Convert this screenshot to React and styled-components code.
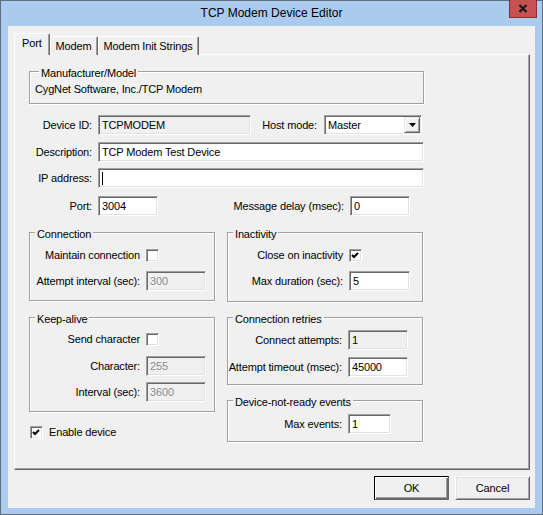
import styled, { createGlobalStyle } from "styled-components";

const GlobalStyle = createGlobalStyle`
  html, body {
    margin: 0;
    padding: 0;
    background: #ffffff;
  }
  body {
    font-family: "Liberation Sans", Arial, sans-serif;
    font-size: 11px;
    letter-spacing: -0.15px;
    color: #000;
  }
`;

const Window = styled.div`
  position: relative;
  width: 543px;
  height: 515px;
  box-sizing: border-box;
  border: 1px solid #5d6f83;
  background: #aacbee;
  display: flex;
  flex-direction: column;
`;

const TitleBar = styled.div`
  height: 25px;
  display: flex;
  align-items: center;
  justify-content: center;
  font-family: "Liberation Sans", Arial, sans-serif;
  font-size: 12px;
  letter-spacing: 0;
  color: #000;
  padding-bottom: 1px;
  box-sizing: border-box;
`;

const CloseButton = styled.div`
  position: absolute;
  top: -1px;
  right: 5px;
  width: 28px;
  height: 18px;
  box-sizing: border-box;
  background: #c75050;
  border: 1px solid #84322f;
  border-top: none;
  display: flex;
  align-items: center;
  justify-content: center;
`;

const Client = styled.div`
  margin: 0 7px;
  height: 482px;
  box-sizing: border-box;
  background: #f0f0f0;
  padding: 8px 5px 0 6px;
  display: flex;
  flex-direction: column;
`;

const TabStrip = styled.div`
  display: flex;
  align-items: flex-end;
  height: 21px;
  position: relative;
  z-index: 1;
  margin-bottom: -1px;
`;

const Tab = styled.div`
  box-sizing: border-box;
  height: ${(p) => (p.$active ? 22 : 19)}px;
  padding: 0 ${(p) => (p.$active ? 7 : 5)}px;
  background: #f0f0f0;
  border-left: 1px solid #fff;
  border-top: 1px solid #fff;
  border-right: 1px solid #696969;
  box-shadow: inset -1px 0 0 #a0a0a0;
  border-radius: 2px 2px 0 0;
  display: flex;
  align-items: center;
  padding-bottom: ${(p) => (p.$active ? 3 : 1)}px;
`;

const Panel = styled.div`
  height: 416px;
  box-sizing: border-box;
  border-top: 1px solid #fff;
  border-left: 1px solid #fff;
  border-right: 1px solid #696969;
  border-bottom: 1px solid #696969;
  box-shadow: inset -1px -1px 0 #a0a0a0;
  padding: 16px 0 0 14px;
`;

const Group = styled.div`
  position: relative;
  box-sizing: border-box;
  width: ${(p) => p.$w}px;
  height: ${(p) => p.$h}px;
  margin-top: ${(p) => p.$mt || 0}px;
  padding-top: ${(p) => p.$pt || 0}px;
  border: 1px solid #a0a0a0;
  box-shadow: inset 1px 1px 0 #fff, 1px 1px 0 #fff;
`;

const Legend = styled.span`
  position: absolute;
  top: -5px;
  left: ${(p) => p.$lx || 5}px;
  padding: 0 2px;
  line-height: 13px;
  background: #f0f0f0;
`;

const Plain = styled.div`
  padding: 11px 0 0 5px;
  line-height: 13px;
`;

const Row = styled.div`
  display: flex;
  align-items: center;
  height: ${(p) => p.$h || 20}px;
  margin-top: ${(p) => p.$mt || 0}px;
`;

const Label = styled.span`
  width: ${(p) => p.$w}px;
  margin-right: ${(p) => (p.$gap === undefined ? 6 : p.$gap)}px;
  text-align: right;
  line-height: 13px;
  white-space: nowrap;
  flex-shrink: 0;
`;

const Field = styled.div`
  width: ${(p) => p.$w}px;
  height: 20px;
  box-sizing: border-box;
  flex-shrink: 0;
  border-top: 1px solid #a0a0a0;
  border-left: 1px solid #a0a0a0;
  border-right: 1px solid #fff;
  border-bottom: 1px solid #fff;
  box-shadow: inset 1px 1px 0 #696969, inset -1px -1px 0 #e3e3e3;
  background: ${(p) => (p.$readOnly || p.$disabled ? "#f0f0f0" : "#fff")};
  color: ${(p) => (p.$disabled ? "#8d8d8d" : "#000")};
  padding-left: 3px;
  display: flex;
  align-items: center;
  white-space: nowrap;
`;

const Caret = styled.span`
  width: 1px;
  height: 13px;
  background: #000;
`;

const DropButton = styled.div`
  margin-left: auto;
  margin-right: 1px;
  width: 16px;
  height: 16px;
  box-sizing: border-box;
  background: #f0f0f0;
  border-top: 1px solid #e3e3e3;
  border-left: 1px solid #e3e3e3;
  border-right: 1px solid #696969;
  border-bottom: 1px solid #696969;
  box-shadow: inset 1px 1px 0 #fff, inset -1px -1px 0 #a0a0a0;
  display: flex;
  align-items: center;
  justify-content: center;
`;

const Check = styled.div`
  width: 13px;
  height: 13px;
  box-sizing: border-box;
  flex-shrink: 0;
  border-top: 1px solid #a0a0a0;
  border-left: 1px solid #a0a0a0;
  border-right: 1px solid #fff;
  border-bottom: 1px solid #fff;
  box-shadow: inset 1px 1px 0 #696969, inset -1px -1px 0 #e3e3e3;
  background: #fff;
  display: flex;
  align-items: center;
  justify-content: center;
`;

const Columns = styled.div`
  display: flex;
  gap: 12px;
  margin-top: 16px;
`;

const Column = styled.div`
  display: flex;
  flex-direction: column;
`;

const EnableRow = styled.div`
  display: flex;
  align-items: center;
  gap: 6px;
  margin: 14px 0 0 1px;
  line-height: 13px;
`;

const Footer = styled.div`
  display: flex;
  justify-content: flex-end;
  gap: 6px;
  margin-top: 6px;
`;

const Button = styled.div`
  width: 75px;
  height: 24px;
  box-sizing: border-box;
  background: #f0f0f0;
  display: flex;
  align-items: center;
  justify-content: center;
  border: 1px solid ${(p) => (p.$default ? "#000" : "#fff")};
  box-shadow: ${(p) =>
    p.$default
      ? "inset 1px 1px 0 #fff, inset -1px -1px 0 #696969, inset -2px -2px 0 #a0a0a0"
      : "inset 1px 1px 0 #e3e3e3, inset -1px -1px 0 #a0a0a0"};
  border-right-color: #696969;
  border-bottom-color: #696969;
`;

const CheckMark = () => (
  <svg width="9" height="9" viewBox="0 0 9 9">
    <polyline points="1,4 3,6 7,2" fill="none" stroke="#000" strokeWidth="2" />
  </svg>
);

const CheckBox = ({ checked }) => <Check>{checked && <CheckMark />}</Check>;

const App = () => {
  return (
    <>
      <GlobalStyle />
      <Window>
        <TitleBar>TCP Modem Device Editor</TitleBar>
        <CloseButton>
          <svg width="10" height="9" viewBox="0 0 10 9">
            <path d="M1.5 1 L8.5 8 M8.5 1 L1.5 8" stroke="#1a1a1a" strokeWidth="2.2" />
          </svg>
        </CloseButton>
        <Client>
          <TabStrip>
            <Tab $active>Port</Tab>
            <Tab>Modem</Tab>
            <Tab>Modem Init Strings</Tab>
          </TabStrip>
          <Panel>
            <Group $w={395} $h={33}>
              <Legend $lx={9}>Manufacturer/Model</Legend>
              <Plain>CygNet Software, Inc./TCP Modem</Plain>
            </Group>

            <Row $mt={11}>
              <Label $w={63}>Device ID:</Label>
              <Field $w={153} $readOnly>TCPMODEM</Field>
              <Label $w={66} $gap={7}>Host mode:</Label>
              <Field $w={98}>
                Master
                <DropButton>
                  <svg width="7" height="4" viewBox="0 0 7 4">
                    <path d="M0 0 H7 L3.5 4 Z" fill="#000" />
                  </svg>
                </DropButton>
              </Field>
            </Row>
            <Row $mt={7}>
              <Label $w={63}>Description:</Label>
              <Field $w={326}>TCP Modem Test Device</Field>
            </Row>
            <Row $mt={6}>
              <Label $w={63}>IP address:</Label>
              <Field $w={326}>
                <Caret />
              </Field>
            </Row>
            <Row $mt={8}>
              <Label $w={63}>Port:</Label>
              <Field $w={60}>3004</Field>
              <Label $w={186}>Message delay (msec):</Label>
              <Field $w={60}>0</Field>
            </Row>

            <Columns>
              <Column>
                <Group $w={186} $h={69} $pt={16}>
                  <Legend>Connection</Legend>
                  <Row $h={13}>
                    <Label $w={110}>Maintain connection</Label>
                    <CheckBox />
                  </Row>
                  <Row $mt={9}>
                    <Label $w={110}>Attempt interval (sec):</Label>
                    <Field $w={60} $disabled>300</Field>
                  </Row>
                </Group>
                <Group $w={186} $h={95} $pt={15} $mt={16}>
                  <Legend>Keep-alive</Legend>
                  <Row $h={13}>
                    <Label $w={110}>Send character</Label>
                    <CheckBox />
                  </Row>
                  <Row $mt={10}>
                    <Label $w={110}>Character:</Label>
                    <Field $w={60} $disabled>255</Field>
                  </Row>
                  <Row $mt={6}>
                    <Label $w={110}>Interval (sec):</Label>
                    <Field $w={60} $disabled>3600</Field>
                  </Row>
                </Group>
                <EnableRow>
                  <CheckBox checked />
                  Enable device
                </EnableRow>
              </Column>

              <Column>
                <Group $w={196} $h={70} $pt={16}>
                  <Legend>Inactivity</Legend>
                  <Row $h={13}>
                    <Label $w={115}>Close on inactivity</Label>
                    <CheckBox checked />
                  </Row>
                  <Row $mt={9}>
                    <Label $w={115}>Max duration (sec):</Label>
                    <Field $w={61}>5</Field>
                  </Row>
                </Group>
                <Group $w={196} $h={68} $pt={12} $mt={15}>
                  <Legend>Connection retries</Legend>
                  <Row>
                    <Label $w={114}>Connect attempts:</Label>
                    <Field $w={60} $readOnly>1</Field>
                  </Row>
                  <Row $mt={7}>
                    <Label $w={114}>Attempt timeout (msec):</Label>
                    <Field $w={60}>45000</Field>
                  </Row>
                </Group>
                <Group $w={196} $h={42} $pt={13} $mt={15}>
                  <Legend>Device-not-ready events</Legend>
                  <Row>
                    <Label $w={114}>Max events:</Label>
                    <Field $w={43}>1</Field>
                  </Row>
                </Group>
              </Column>
            </Columns>
          </Panel>
          <Footer>
            <Button $default>OK</Button>
            <Button>Cancel</Button>
          </Footer>
        </Client>
      </Window>
    </>
  );
};

export default App;
